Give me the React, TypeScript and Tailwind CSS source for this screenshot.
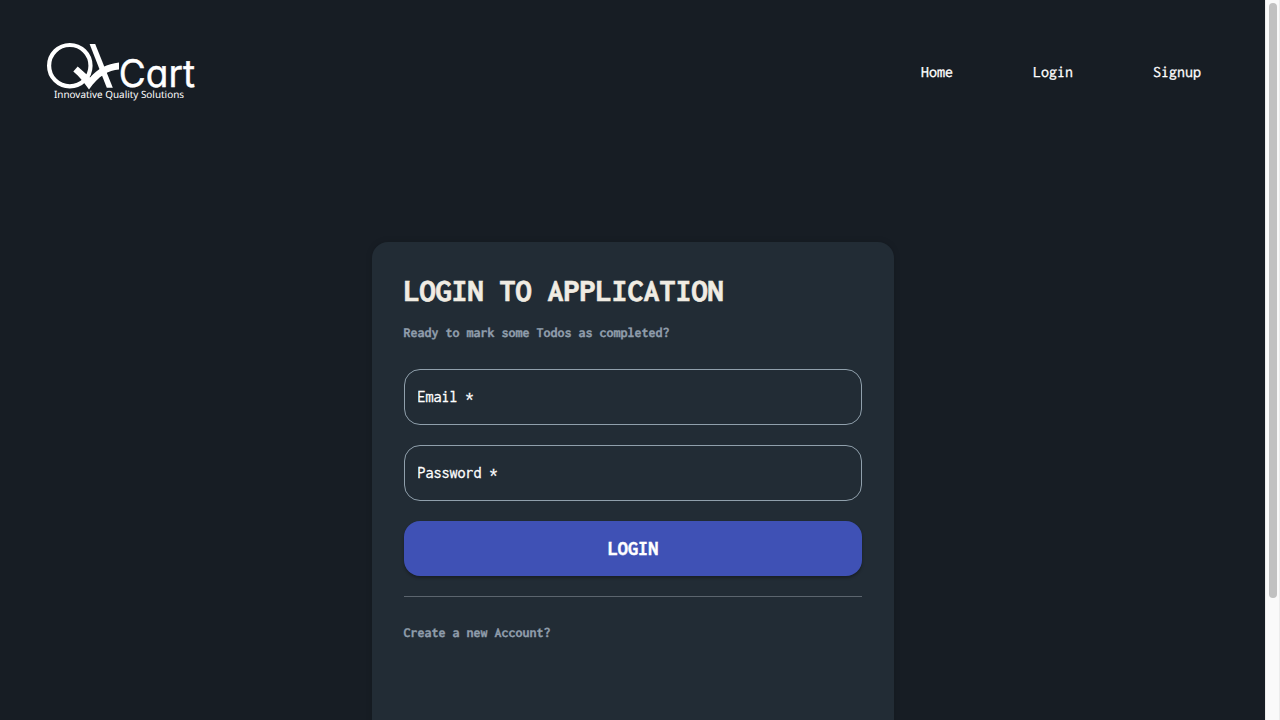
function Logo() {
  return (
    <svg className="h-[72px] w-[160px]" viewBox="0 0 160 72" fill="#fff" role="img" aria-label="QKart">
      <circle cx="29.8" cy="29.7" r="20.7" fill="none" stroke="#fff" strokeWidth="4.2" />
      <path d="M49.6 8H55.2L72.8 51.8H66.8Z" />
      <path d="M33.3 35.4L37.7 30.6L50 41.5C57.5 33 67 28 79 26.6V33.6C68.5 34.4 58.5 40 49 53.4C44.5 46.8 39.5 40.6 33.3 35.4Z" />
      <text
        x="78.8"
        y="51.4"
        textLength="76.2"
        lengthAdjust="spacingAndGlyphs"
        stroke="#fff"
        strokeWidth="0.4"
        className="font-['Inter',sans-serif] text-[38px] [font-feature-settings:'cv11']"
      >
        Cart
      </text>
      <text x="14" y="62.4" textLength="130" lengthAdjust="spacingAndGlyphs" className="font-['Noto_Sans',sans-serif] text-[10px]">
        Innovative Quality Solutions
      </text>
    </svg>
  );
}

function Field({ label, type }: { label: string; type: string }) {
  return (
    <input
      type={type}
      placeholder={label}
      aria-label={label}
      className="block h-14 w-full rounded-2xl border border-[#90a0ac] bg-transparent pr-3 pb-0.5 pl-[12.5px] text-base text-white outline-none [-webkit-text-stroke:0.3px_white] placeholder:text-white placeholder:opacity-100"
    />
  );
}

export default function App() {
  return (
    <div className="flex h-screen overflow-hidden bg-[#171d24] font-['Inconsolata','DejaVu_Sans_Mono',monospace] [text-rendering:geometricPrecision]">
      <div className="flex min-w-0 flex-1 flex-col">
        <header className="flex h-36 shrink-0 items-center justify-between pr-16 pl-10">
          <Logo />
          <nav className="flex gap-20 pt-0.5 text-base text-white [-webkit-text-stroke:0.3px_white]">
            <a href="#home">Home</a>
            <a href="#login">Login</a>
            <a href="#signup">Signup</a>
          </nav>
        </header>
        <main className="mt-[98px] ml-[372px] h-[560px] w-[522px] shrink-0 rounded-2xl bg-[#222c35] px-8 pt-8 shadow-[0_0_6px_rgba(0,0,0,0.15)]">
          <h1 className="-ml-[0.5px] h-9 text-[32px] leading-9 font-bold whitespace-nowrap text-[#f0ece3] [-webkit-text-stroke:0.6px_#f0ece3]">
            LOGIN TO APPLICATION
          </h1>
          <p className="-ml-[0.5px] mt-3 h-5 text-sm leading-[22px] font-bold text-[#8f9dab] [-webkit-text-stroke:0.3px_#8f9dab]">
            Ready to mark some Todos as completed?
          </p>
          <form className="mt-[27px] flex flex-col gap-5">
            <Field label="Email *" type="email" />
            <Field label="Password *" type="password" />
            <button
              type="button"
              className="h-[55px] rounded-2xl bg-[#3f51b5] text-xl font-bold tracking-[0.1px] text-white shadow-[0_2px_3px_rgba(0,0,0,0.3)] [-webkit-text-stroke:0.4px_white]"
            >
              LOGIN
            </button>
          </form>
          <hr className="mt-5 border-0 border-t border-[#5c656e]" />
          <p className="-ml-[0.5px] mt-[25px] text-sm leading-[22px] font-bold text-[#8f9dab] [-webkit-text-stroke:0.3px_#8f9dab]">
            Create a new Account?
          </p>
        </main>
      </div>
      <div className="h-full w-[15px] shrink-0 border-x border-[#ececec] bg-[#fafafa] pt-[3px] pl-[3px]">
        <div className="h-[595px] w-2 rounded-full bg-[#c1c1c1]" />
      </div>
    </div>
  );
}
